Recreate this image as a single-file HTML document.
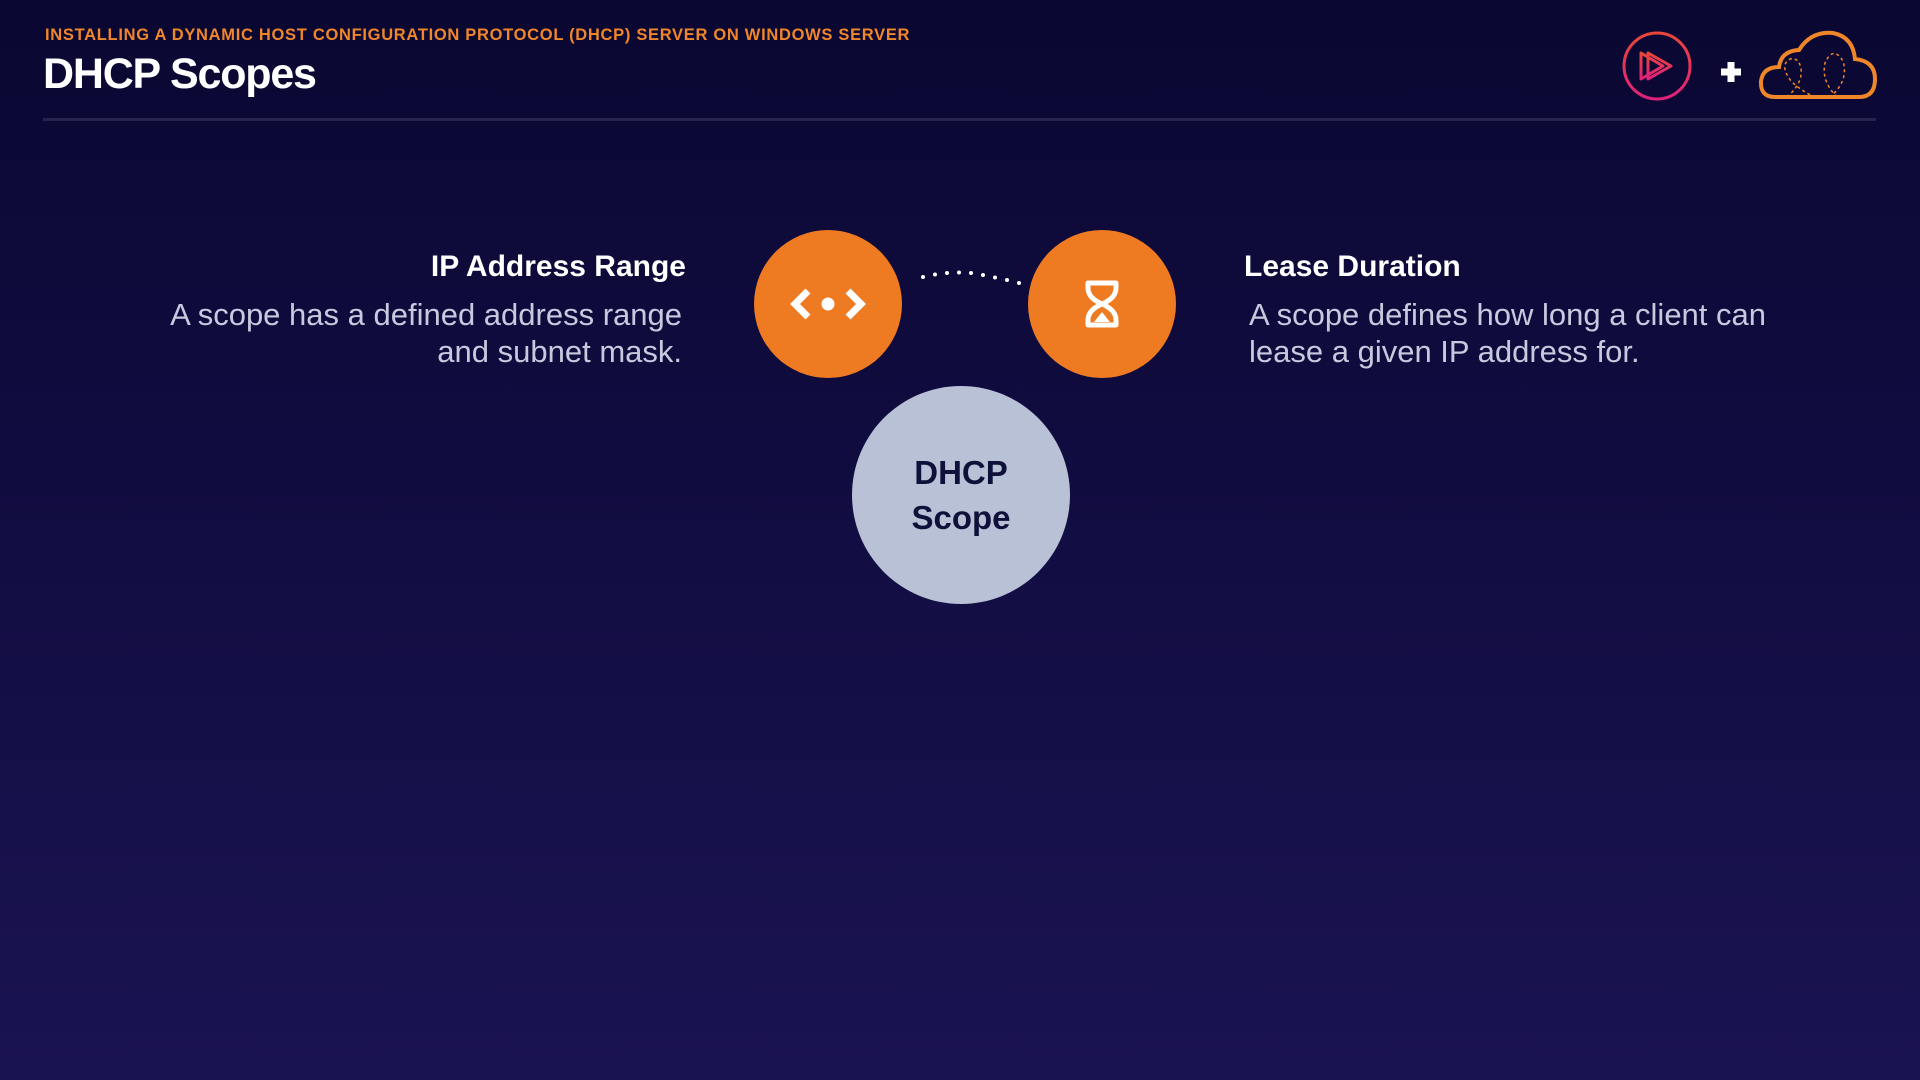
<!DOCTYPE html>
<html><head><meta charset="utf-8"><style>
html,body{margin:0;padding:0}
body{width:1920px;height:1080px;overflow:hidden;position:relative;background:linear-gradient(180deg,#0a0732 0%,#120d42 50%,#1a1352 100%);font-family:"Liberation Sans",sans-serif;}
.a{position:absolute;white-space:nowrap}
</style></head><body>
<div class="a" style="left:45px;top:26px;font-size:16.5px;font-weight:bold;color:#f0862a;letter-spacing:0.7px">INSTALLING A DYNAMIC HOST CONFIGURATION PROTOCOL (DHCP) SERVER ON WINDOWS SERVER</div>
<div class="a" style="left:43px;top:50px;font-size:43px;font-weight:bold;color:#fff;letter-spacing:-1.2px">DHCP Scopes</div>
<div class="a" style="left:43px;top:118px;width:1833px;height:3px;background:#26234e"></div>

<svg class="a" style="left:1615px;top:25px" width="270" height="80" viewBox="0 0 270 80">
<defs><linearGradient id="g" x1="0" y1="0" x2="0" y2="1"><stop offset="0" stop-color="#e8473a"/><stop offset="1" stop-color="#e0207a"/></linearGradient></defs>
<circle cx="42" cy="41" r="33" fill="none" stroke="url(#g)" stroke-width="3"/>
<path d="M26 28 V54 L48 41 Z M33 28 V54 L56 41 Z" fill="none" stroke="url(#g)" stroke-width="3" stroke-linejoin="round"/>
<path d="M106 47 h20 M116 37 v20" stroke="#fff" stroke-width="7"/>
<path d="M160 72 Q145 72 146 56 Q148 42 164 42 Q166 26 184 25 Q196 6 218 8 Q238 12 240 34 Q260 36 260 54 Q260 72 244 72 Z" fill="none" stroke="#f0862a" stroke-width="4"/>
<path d="M172 72 Q188 58 186 44 Q184 32 175 34 Q164 40 176 56 Q186 66 200 72 M222 72 Q206 56 210 38 Q218 20 228 36 Q234 56 215 72" fill="none" stroke="#f0862a" stroke-width="1.5" stroke-dasharray="3 3"/>
</svg>

<div class="a" style="right:1234px;top:250px;font-size:30px;font-weight:bold;color:#fff">IP Address Range</div>
<div class="a" style="right:1238px;top:296px;font-size:31px;color:#c6cadf;text-align:right;line-height:37px">A scope has a defined address range<br>and subnet mask.</div>
<div class="a" style="left:1244px;top:250px;font-size:30px;font-weight:bold;color:#fff">Lease Duration</div>
<div class="a" style="left:1249px;top:296px;font-size:31px;color:#c6cadf;line-height:37px">A scope defines how long a client can<br>lease a given IP address for.</div>

<svg class="a" style="left:0;top:0" width="1920" height="700">
<circle cx="828" cy="304" r="74" fill="#ee7a22"/>
<circle cx="1102" cy="304" r="74" fill="#ee7a22"/>
<circle cx="961" cy="495" r="109" fill="#b8c1d6"/>
<path d="M808 291 L795 304 L808 317 M848 291 L861 304 L848 317" fill="none" stroke="#fff" stroke-width="7"/>
<circle cx="828" cy="304" r="6.5" fill="#fff"/>
<path d="M1088 283 h28 v5 q0 10 -14 16 q14 6 14 16 v5 h-28 v-5 q0 -10 14 -16 q-14 -6 -14 -16 z" fill="none" stroke="#fff" stroke-width="5" stroke-linejoin="round"/>
<path d="M1094 322 L1102 312 L1110 322 Z" fill="#fff"/>
<g fill="#fff"><circle cx="923" cy="277" r="2"/><circle cx="935" cy="274.5" r="2"/><circle cx="947" cy="273" r="2"/><circle cx="959" cy="272.5" r="2"/><circle cx="971" cy="273" r="2"/><circle cx="983" cy="275" r="2"/><circle cx="995" cy="277.5" r="2"/><circle cx="1007" cy="280" r="2"/><circle cx="1019" cy="283" r="2"/></g>
</svg>
<div class="a" style="left:861px;width:200px;top:450px;text-align:center;font-size:33px;font-weight:bold;color:#10113a;line-height:45px">DHCP<br>Scope</div>
</body></html>
